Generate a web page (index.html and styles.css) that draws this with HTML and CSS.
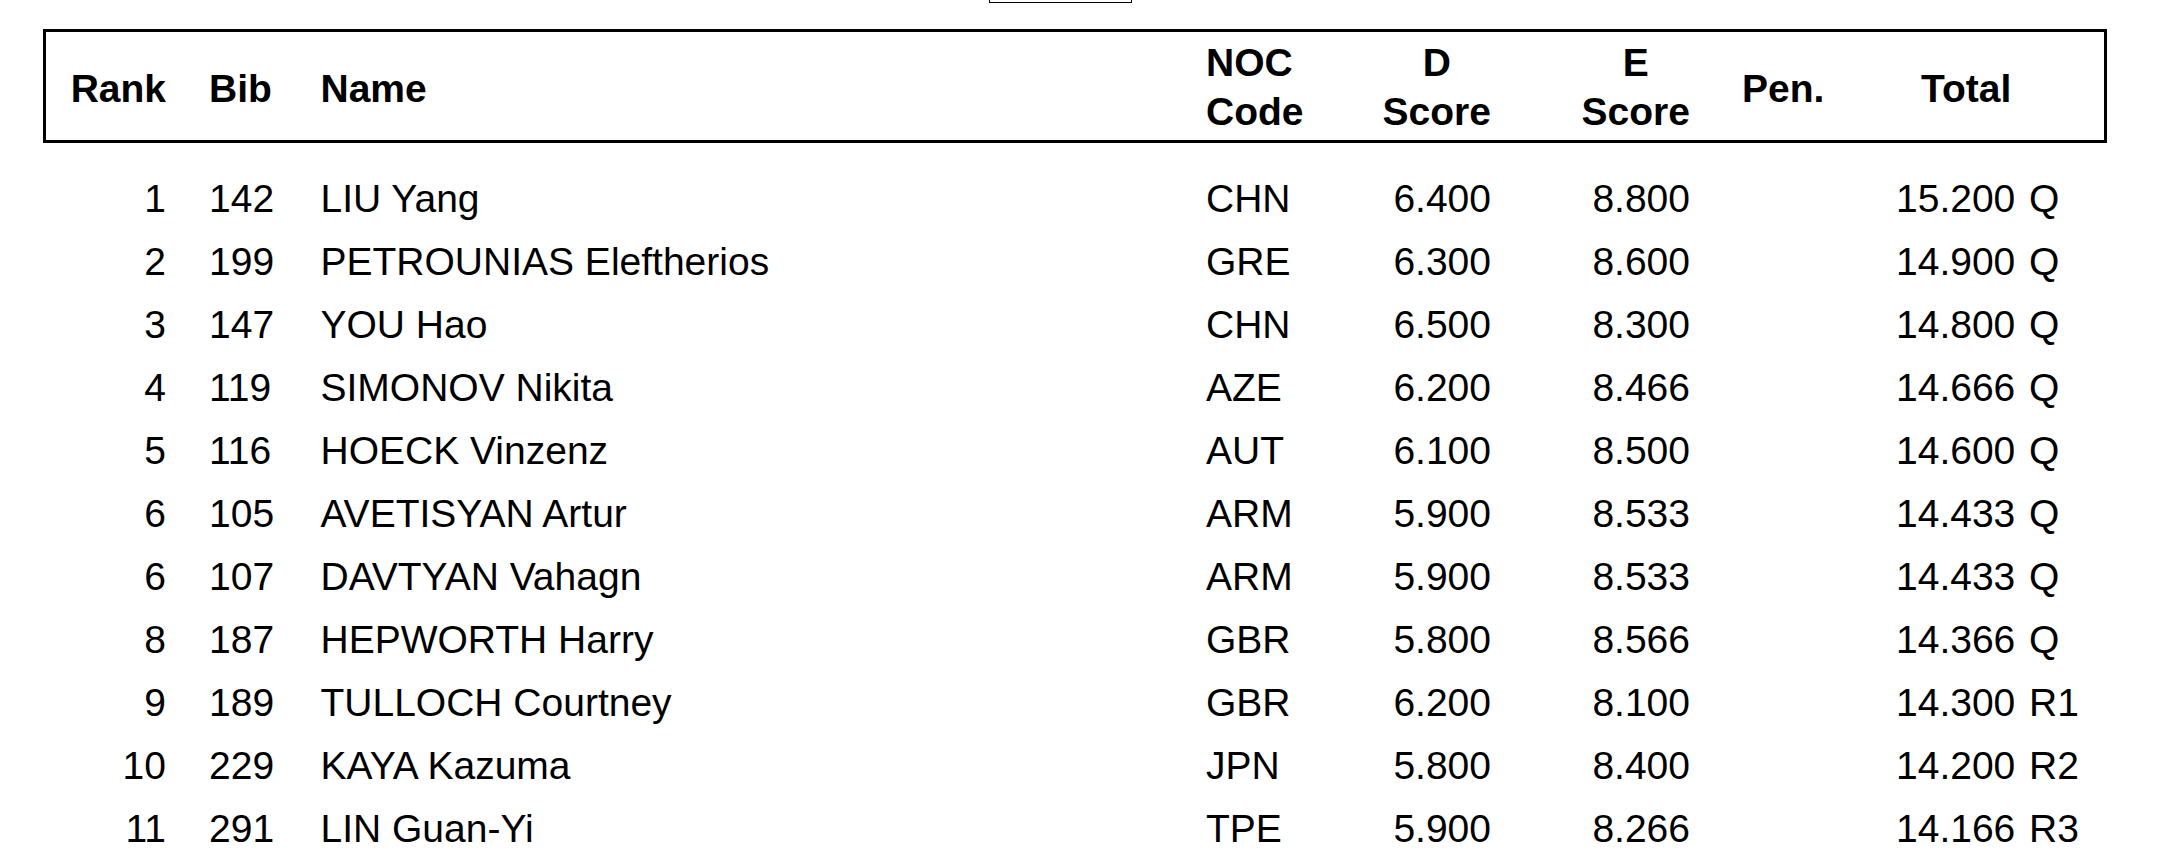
FILE: index.html
```html
<!DOCTYPE html>
<html lang="en">
<head>
<meta charset="utf-8">
<title>Results</title>
<link rel="stylesheet" href="styles.css">
</head>
<body>
<div class="tab-stub"></div>
<div class="results">
  <div class="head">
    <div class="c-rank single">Rank</div>
    <div class="c-bib single">Bib</div>
    <div class="c-name single">Name</div>
    <div class="c-noc">NOC<br>Code</div>
    <div class="c-d"><span class="stack">D<br>Score</span></div>
    <div class="c-e"><span class="stack">E<br>Score</span></div>
    <div class="c-pen single">Pen.</div>
    <div class="c-total-head single">Total</div>
  </div>
  <div class="rows">
    <div class="row"><div class="c-rank">1</div><div class="c-bib">142</div><div class="c-name">LIU Yang</div><div class="c-noc">CHN</div><div class="c-d">6.400</div><div class="c-e">8.800</div><div class="c-pen"></div><div class="c-total">15.200 Q</div></div>
    <div class="row"><div class="c-rank">2</div><div class="c-bib">199</div><div class="c-name">PETROUNIAS Eleftherios</div><div class="c-noc">GRE</div><div class="c-d">6.300</div><div class="c-e">8.600</div><div class="c-pen"></div><div class="c-total">14.900 Q</div></div>
    <div class="row"><div class="c-rank">3</div><div class="c-bib">147</div><div class="c-name">YOU Hao</div><div class="c-noc">CHN</div><div class="c-d">6.500</div><div class="c-e">8.300</div><div class="c-pen"></div><div class="c-total">14.800 Q</div></div>
    <div class="row"><div class="c-rank">4</div><div class="c-bib">119</div><div class="c-name">SIMONOV Nikita</div><div class="c-noc">AZE</div><div class="c-d">6.200</div><div class="c-e">8.466</div><div class="c-pen"></div><div class="c-total">14.666 Q</div></div>
    <div class="row"><div class="c-rank">5</div><div class="c-bib">116</div><div class="c-name">HOECK Vinzenz</div><div class="c-noc">AUT</div><div class="c-d">6.100</div><div class="c-e">8.500</div><div class="c-pen"></div><div class="c-total">14.600 Q</div></div>
    <div class="row"><div class="c-rank">6</div><div class="c-bib">105</div><div class="c-name">AVETISYAN Artur</div><div class="c-noc">ARM</div><div class="c-d">5.900</div><div class="c-e">8.533</div><div class="c-pen"></div><div class="c-total">14.433 Q</div></div>
    <div class="row"><div class="c-rank">6</div><div class="c-bib">107</div><div class="c-name">DAVTYAN Vahagn</div><div class="c-noc">ARM</div><div class="c-d">5.900</div><div class="c-e">8.533</div><div class="c-pen"></div><div class="c-total">14.433 Q</div></div>
    <div class="row"><div class="c-rank">8</div><div class="c-bib">187</div><div class="c-name">HEPWORTH Harry</div><div class="c-noc">GBR</div><div class="c-d">5.800</div><div class="c-e">8.566</div><div class="c-pen"></div><div class="c-total">14.366 Q</div></div>
    <div class="row"><div class="c-rank">9</div><div class="c-bib">189</div><div class="c-name">TULLOCH Courtney</div><div class="c-noc">GBR</div><div class="c-d">6.200</div><div class="c-e">8.100</div><div class="c-pen"></div><div class="c-total">14.300 R1</div></div>
    <div class="row"><div class="c-rank">10</div><div class="c-bib">229</div><div class="c-name">KAYA Kazuma</div><div class="c-noc">JPN</div><div class="c-d">5.800</div><div class="c-e">8.400</div><div class="c-pen"></div><div class="c-total">14.200 R2</div></div>
    <div class="row"><div class="c-rank">11</div><div class="c-bib">291</div><div class="c-name">LIN Guan-Yi</div><div class="c-noc">TPE</div><div class="c-d">5.900</div><div class="c-e">8.266</div><div class="c-pen"></div><div class="c-total">14.166 R3</div></div>
  </div>
</div>
</body>
</html>
```

FILE: styles.css
```css
html, body {
  margin: 0;
  padding: 0;
  background: #ffffff;
  color: #000000;
}

body {
  font-family: "Liberation Sans", Arial, sans-serif;
  font-size: 39px;
  overflow: hidden;
}

.tab-stub {
  margin-left: 989px;
  width: 141px;
  height: 2px;
  border: 1px solid #000;
  border-top: none;
}

.results {
  --cols: 120px 154.5px 885.5px 174px 111px 199px 180px 234px;
}

.head {
  margin: 26px 0 0 43px;
  width: 2064px;
  height: 114px;
  box-sizing: border-box;
  border: 3px solid #000;
  padding-top: 3px;
  display: grid;
  grid-template-columns: var(--cols);
  align-items: center;
  font-weight: bold;
  line-height: 48.3px;
}

.head .single {
  padding-top: 4px;
}

.rows {
  margin: 24.3px 0 0 46px;
  width: 2058px;
  line-height: 63px;
}

.row {
  display: grid;
  grid-template-columns: var(--cols);
  white-space: nowrap;
}

.c-rank { text-align: right; }
.c-bib { padding-left: 43px; }
.c-d, .c-e { text-align: right; }
.stack {
  display: inline-block;
  text-align: center;
}
.c-pen { padding-left: 52px; }
.c-total {
  padding-left: 26px;
  word-spacing: 3px;
}
.c-total-head { padding-left: 51px; }
```
